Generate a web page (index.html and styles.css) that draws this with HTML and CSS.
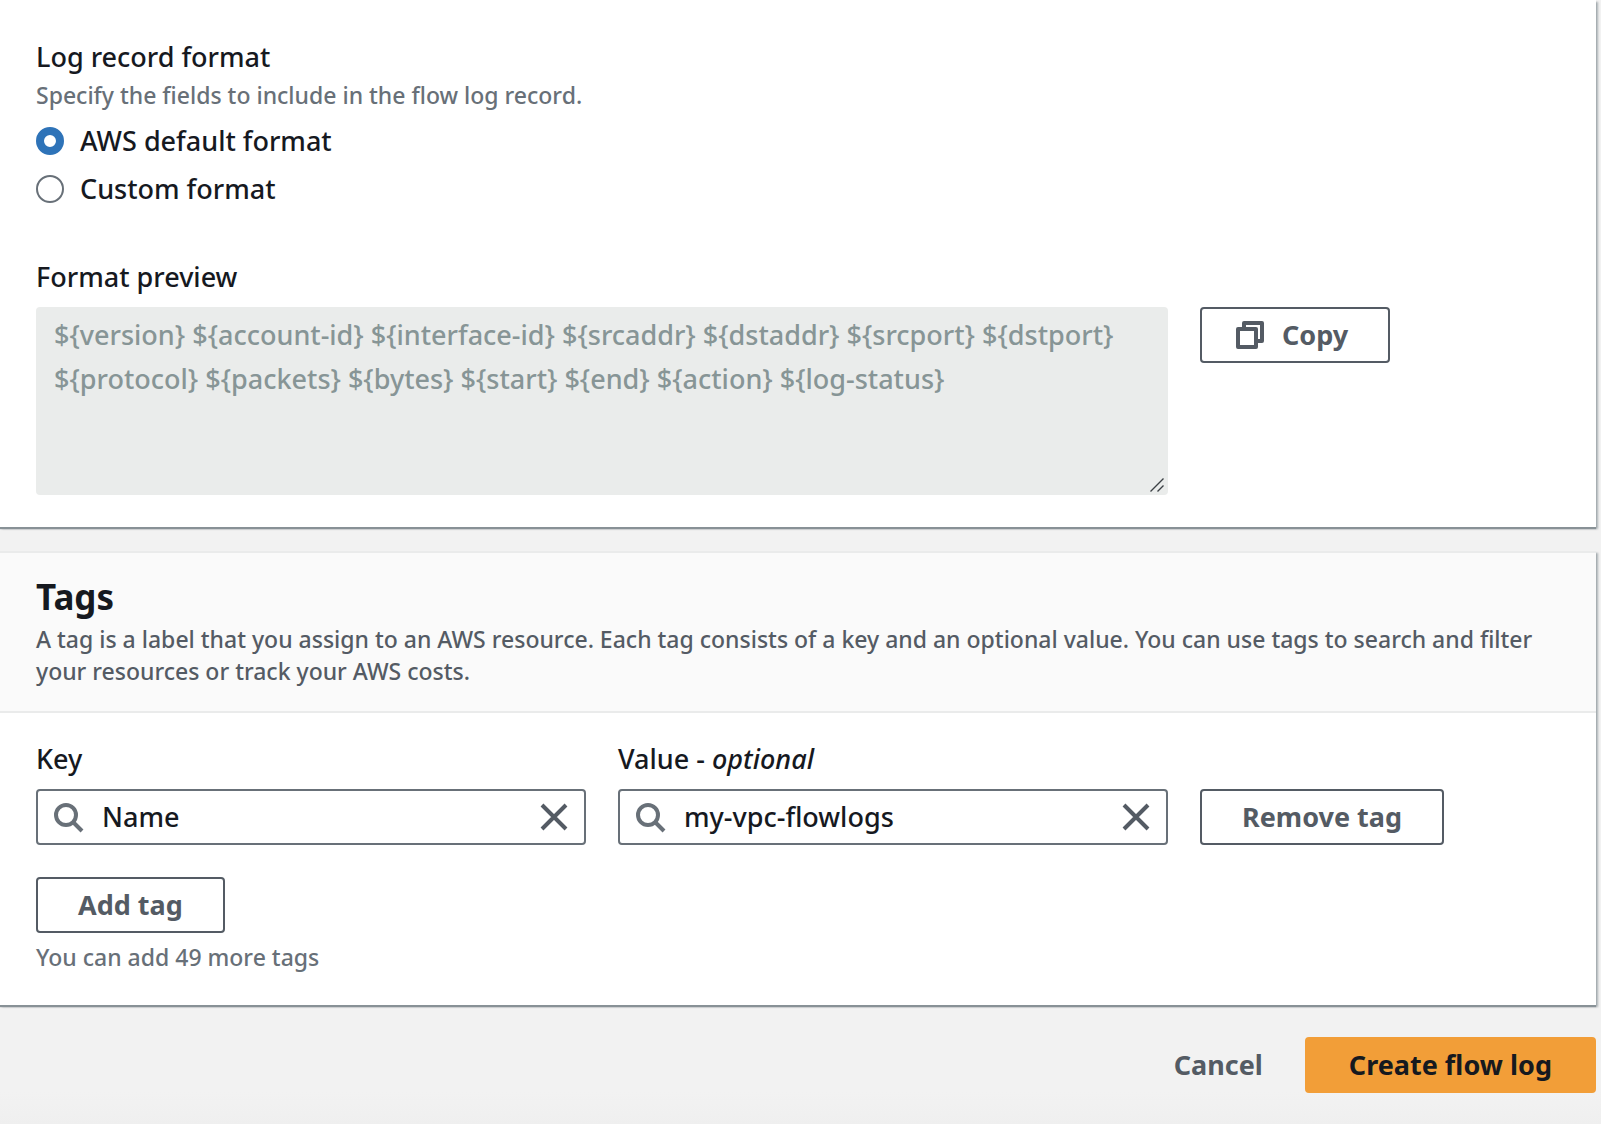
FILE: index.html
```html
<!DOCTYPE html>
<html lang="en">
<head>
<meta charset="utf-8">
<meta name="viewport" content="width=device-width, initial-scale=1">
<title>Create flow log</title>
<link rel="stylesheet" href="styles.css">
</head>
<body>
<form class="page">
  <section class="card card-settings">
    <fieldset class="choices" aria-describedby="format-hint">
      <legend class="label">Log record format</legend>
      <p class="hint hint-above" id="format-hint">Specify the fields to include in the flow log record.</p>
      <label class="choice"><input class="radio" type="radio" name="format" checked>AWS default format</label>
      <label class="choice"><input class="radio" type="radio" name="format">Custom format</label>
    </fieldset>
    <div class="preview">
      <label class="label" for="preview">Format preview</label>
      <div class="columns">
        <div class="preview-box">
          <textarea class="preview-text" id="preview" disabled>${version} ${account-id} ${interface-id} ${srcaddr} ${dstaddr} ${srcport} ${dstport} ${protocol} ${packets} ${bytes} ${start} ${end} ${action} ${log-status}</textarea>
          <svg class="grip" viewBox="0 0 14 14" aria-hidden="true"><path d="M0.500 13.500 13.500 0.500M7.500 13.500 13.500 7.500"/></svg>
        </div>
        <div class="side">
          <button class="button button-icon" type="button"><svg class="icon" viewBox="0 0 16 16" aria-hidden="true"><path stroke-linejoin="round" d="M2 5h9v9H2zM5 5V2h9v9h-3"/></svg>Copy</button>
        </div>
      </div>
    </div>
  </section>

  <section class="card">
    <header class="card-header">
      <h2 class="title">Tags</h2>
      <p class="summary">A tag is a label that you assign to an AWS resource. Each tag consists of a key and an optional value. You can use tags to search and filter your resources or track your AWS costs.</p>
    </header>
    <div class="card-body">
      <div class="columns tag-row">
        <div class="field">
          <label class="label" for="tag-key">Key</label>
          <div class="search">
            <svg class="icon icon-search" viewBox="0 0 16 16" aria-hidden="true"><circle cx="7" cy="7" r="5"/><path d="M15 15l-4.500-4.500"/></svg>
            <input class="search-input" id="tag-key" type="text" value="Name">
            <button class="clear" type="button" aria-label="Clear key"><svg class="icon" viewBox="0 0 16 16" aria-hidden="true"><path d="M2 2l12 12M14 2L2 14"/></svg></button>
          </div>
        </div>
        <div class="field">
          <label class="label" for="tag-value">Value - <em>optional</em></label>
          <div class="search">
            <svg class="icon icon-search" viewBox="0 0 16 16" aria-hidden="true"><circle cx="7" cy="7" r="5"/><path d="M15 15l-4.500-4.500"/></svg>
            <input class="search-input" id="tag-value" type="text" value="my-vpc-flowlogs">
            <button class="clear" type="button" aria-label="Clear value"><svg class="icon" viewBox="0 0 16 16" aria-hidden="true"><path d="M2 2l12 12M14 2L2 14"/></svg></button>
          </div>
        </div>
        <div class="side">
          <button class="button" type="button">Remove tag</button>
        </div>
      </div>
      <button class="button" type="button">Add tag</button>
      <p class="hint hint-below">You can add 49 more tags</p>
    </div>
  </section>

  <footer class="actions">
    <button class="button button-link" type="button">Cancel</button>
    <button class="button button-primary" type="submit">Create flow log</button>
  </footer>
</form>
</body>
</html>
```
FILE: styles.css
```css
* {
  box-sizing: border-box;
}

body {
  margin: 0;
  min-height: 100vh;
  background: linear-gradient(to top, #efefef, #f2f2f2 32px);
  color: #16191f;
  font-family: "Noto Sans", "Open Sans", sans-serif;
  font-size: 27px;
  font-weight: 500;
  line-height: 44px;
}

h2,
p,
fieldset {
  margin: 0;
  padding: 0;
  border: 0;
}

.page {
  display: flex;
  flex-direction: column;
  gap: 24px;
  padding-right: 5px;
}

.card {
  background: #ffffff;
  border-top: 2px solid #eaebeb;
  box-shadow: 0 2px 1px #889196, 2px 2px 2px rgba(0, 28, 36, 0.3);
}

.card-settings {
  border-top: 0;
  padding: 35px 40px 32px 36px;
}

.label {
  display: block;
  padding: 0;
}

.hint,
.summary {
  font-size: 23px;
  line-height: 32px;
}

.hint {
  color: #687078;
}

.hint-above {
  margin-bottom: 4px;
}

.choices {
  display: flex;
  flex-direction: column;
}

.choice {
  display: flex;
  align-items: center;
  gap: 16px;
  margin-top: 4px;
}

.radio {
  appearance: none;
  width: 28px;
  height: 28px;
  margin: 0;
  border: 2px solid #687078;
  border-radius: 50%;
  background: #ffffff;
}

.radio:checked {
  border: 8px solid #2e73b8;
}

.preview {
  margin-top: 44px;
}

.columns {
  display: grid;
  grid-template-columns: repeat(8, 1fr);
  column-gap: 32px;
}

.preview-box {
  position: relative;
  grid-column: span 6;
  margin-top: 8px;
}

.preview-text {
  display: block;
  width: 100%;
  height: 188px;
  padding: 6px 18px;
  border: 0;
  border-radius: 4px;
  background: #eaeceb;
  color: #879596;
  font: inherit;
  resize: none;
}

.grip {
  position: absolute;
  right: 4px;
  bottom: 3px;
  width: 14px;
  height: 14px;
  fill: none;
  stroke: #3c4045;
  stroke-width: 1.4;
}

.side {
  grid-column: span 2;
  align-self: end;
}

.preview .side {
  align-self: start;
  margin-top: 8px;
}

.button {
  display: inline-flex;
  align-items: center;
  justify-content: center;
  height: 56px;
  padding: 0 40px;
  border: 2px solid #545b64;
  border-radius: 4px;
  background: #ffffff;
  color: #545b64;
  font: inherit;
  font-weight: 700;
  white-space: nowrap;
}

.button-icon {
  gap: 16px;
  padding: 0 40px 0 32px;
}

.button-link {
  border-color: transparent;
  background: transparent;
}

.button-primary {
  padding: 0 42px;
  border-color: #f29e38;
  background: #f29e38;
  color: #16191f;
}

.icon {
  display: block;
  flex: none;
  width: 32px;
  height: 32px;
  fill: none;
  stroke: currentColor;
  stroke-width: 2;
}

.icon-search {
  color: #687078;
}

.card-header {
  padding: 18px 40px 24px 36px;
  border-bottom: 2px solid #eaebeb;
  background: #fafafa;
}

.title {
  font-size: 35px;
  font-weight: 700;
  line-height: 52px;
}

.summary {
  color: #545b64;
}

.card-body {
  padding: 24px 40px 32px 36px;
}

.tag-row {
  margin-bottom: 32px;
}

.field {
  grid-column: span 3;
}

.search {
  display: flex;
  align-items: center;
  gap: 18px;
  height: 56px;
  margin-top: 8px;
  padding: 0 14px;
  border: 2px solid #687078;
  border-radius: 4px;
}

.search-input {
  flex: 1;
  min-width: 0;
  padding: 0;
  border: 0;
  outline: 0;
  background: transparent;
  color: inherit;
  font: inherit;
}

.clear {
  padding: 0;
  border: 0;
  background: transparent;
  color: #545b64;
}

.hint-below {
  margin-top: 8px;
}

.actions {
  display: flex;
  justify-content: flex-end;
  padding: 8px 0 30px;
}
```
